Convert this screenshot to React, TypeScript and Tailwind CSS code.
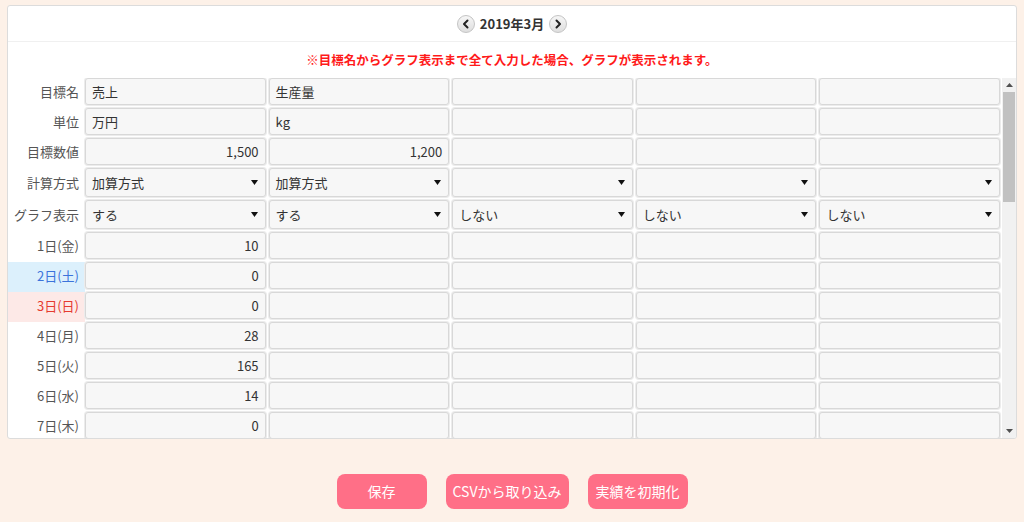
import React from "react";

type Kind = "text" | "num" | "select";

interface Row {
  label: string;
  kind: Kind;
  values: string[];
  tone?: "sat" | "sun";
}

const headRows: Row[] = [
  { label: "目標名", kind: "text", values: ["売上", "生産量", "", "", ""] },
  { label: "単位", kind: "text", values: ["万円", "kg", "", "", ""] },
  { label: "目標数値", kind: "num", values: ["1,500", "1,200", "", "", ""] },
  { label: "計算方式", kind: "select", values: ["加算方式", "加算方式", "", "", ""] },
  { label: "グラフ表示", kind: "select", values: ["する", "する", "しない", "しない", "しない"] },
];

const dayRows: Row[] = [
  { label: "1日(金)", kind: "num", values: ["10", "", "", "", ""] },
  { label: "2日(土)", kind: "num", values: ["0", "", "", "", ""], tone: "sat" },
  { label: "3日(日)", kind: "num", values: ["0", "", "", "", ""], tone: "sun" },
  { label: "4日(月)", kind: "num", values: ["28", "", "", "", ""] },
  { label: "5日(火)", kind: "num", values: ["165", "", "", "", ""] },
  { label: "6日(水)", kind: "num", values: ["14", "", "", "", ""] },
  { label: "7日(木)", kind: "num", values: ["0", "", "", "", ""] },
];

const Caret = () => (
  <svg width="7" height="5" viewBox="0 0 7 5" className="shrink-0">
    <path d="M0 0h7L3.5 5z" fill="#111" />
  </svg>
);

const Cell = ({ kind, value }: { kind: Kind; value: string }) => {
  const base =
    "flex flex-1 min-w-0 items-center rounded-[3px] border border-[#d8d8d8] bg-[#f7f7f7] px-[6px] text-[13px] text-[#333] shadow-[0_0_0_1px_#ececec]";
  if (kind === "select") {
    return (
      <div className={`${base} h-[29px] justify-between pr-[7px]`}>
        <span>{value}</span>
        <Caret />
      </div>
    );
  }
  return (
    <div className={`${base} h-[27px] ${kind === "num" ? "justify-end" : "justify-start"}`}>
      {value}
    </div>
  );
};

const TableRow = ({ row }: { row: Row }) => {
  const tone =
    row.tone === "sat"
      ? "bg-[#dcf0fc] text-[#3b73db]"
      : row.tone === "sun"
      ? "bg-[#fde9e7] text-[#e53b2f]"
      : "text-[#555]";
  return (
    <div className="flex">
      <div className={`flex w-[77px] shrink-0 items-center justify-end pr-[6px] pb-[3px] text-[13px] ${tone}`}>
        {row.label}
      </div>
      <div className="flex flex-1 items-start gap-[3px] pb-[3px] pr-[2px]">
        {row.values.map((v, i) => (
          <Cell key={i} kind={row.kind} value={v} />
        ))}
      </div>
    </div>
  );
};

const NavButton = ({ dir }: { dir: "prev" | "next" }) => (
  <button className="flex h-[18px] w-[18px] items-center justify-center rounded-full border border-[#c4c4c4] bg-gradient-to-b from-[#f6f6f6] to-[#dedede]">
    <svg width="8" height="10" viewBox="0 0 8 10">
      <path
        d={dir === "prev" ? "M5.5 1.5 2 5l3.5 3.5" : "M2.5 1.5 6 5 2.5 8.5"}
        fill="none"
        stroke="#222"
        strokeWidth="2"
        strokeLinecap="round"
        strokeLinejoin="round"
      />
    </svg>
  </button>
);

const buttons = [
  { text: "保存", w: "w-[90px]" },
  { text: "CSVから取り込み", w: "w-[123px]" },
  { text: "実績を初期化", w: "w-[100px]" },
];

export default function App() {
  return (
    <div
      className="h-[522px] w-[1024px] overflow-hidden bg-[#fdf1e8] pt-[5px]"
      style={{ fontFamily: '"Noto Sans CJK JP", "Noto Sans", sans-serif' }}
    >
      <div className="mx-[7px] flex h-[434px] flex-col overflow-hidden rounded-[3px] border border-[#dcdcdc] bg-white">
        <div className="flex h-[36px] shrink-0 items-center justify-center gap-[5px] border-b border-[#f0f0f0]">
          <NavButton dir="prev" />
          <span className="text-[13px] font-bold leading-none text-[#333]">2019年3月</span>
          <NavButton dir="next" />
        </div>
        <div className="flex h-[36px] shrink-0 items-center justify-center text-[12.5px] font-bold text-[#ff1a1a]">
          ※目標名からグラフ表示まで全て入力した場合、グラフが表示されます。
        </div>
        <div className="flex min-h-0 flex-1">
          <div className="min-w-0 flex-1 overflow-hidden">
            {headRows.map((r) => (
              <TableRow key={r.label} row={r} />
            ))}
            {dayRows.map((r) => (
              <TableRow key={r.label} row={r} />
            ))}
          </div>
          <div className="flex w-[14px] shrink-0 flex-col items-center bg-[#f1f1f1]">
            <div className="flex h-[14px] items-center justify-center">
              <svg width="7" height="4" viewBox="0 0 7 4">
                <path d="M0 4h7L3.5 0z" fill="#505050" />
              </svg>
            </div>
            <div className="h-[110px] w-[12px] bg-[#c1c1c1]" />
            <div className="flex-1" />
            <div className="flex h-[14px] items-center justify-center">
              <svg width="7" height="4" viewBox="0 0 7 4">
                <path d="M0 0h7L3.5 4z" fill="#505050" />
              </svg>
            </div>
          </div>
        </div>
      </div>
      <div className="mt-[35px] flex justify-center gap-[19px]">
        {buttons.map((b) => (
          <button
            key={b.text}
            className={`${b.w} h-[35px] rounded-[8px] bg-[#ff6f87] text-[14px] text-white`}
          >
            {b.text}
          </button>
        ))}
      </div>
    </div>
  );
}
